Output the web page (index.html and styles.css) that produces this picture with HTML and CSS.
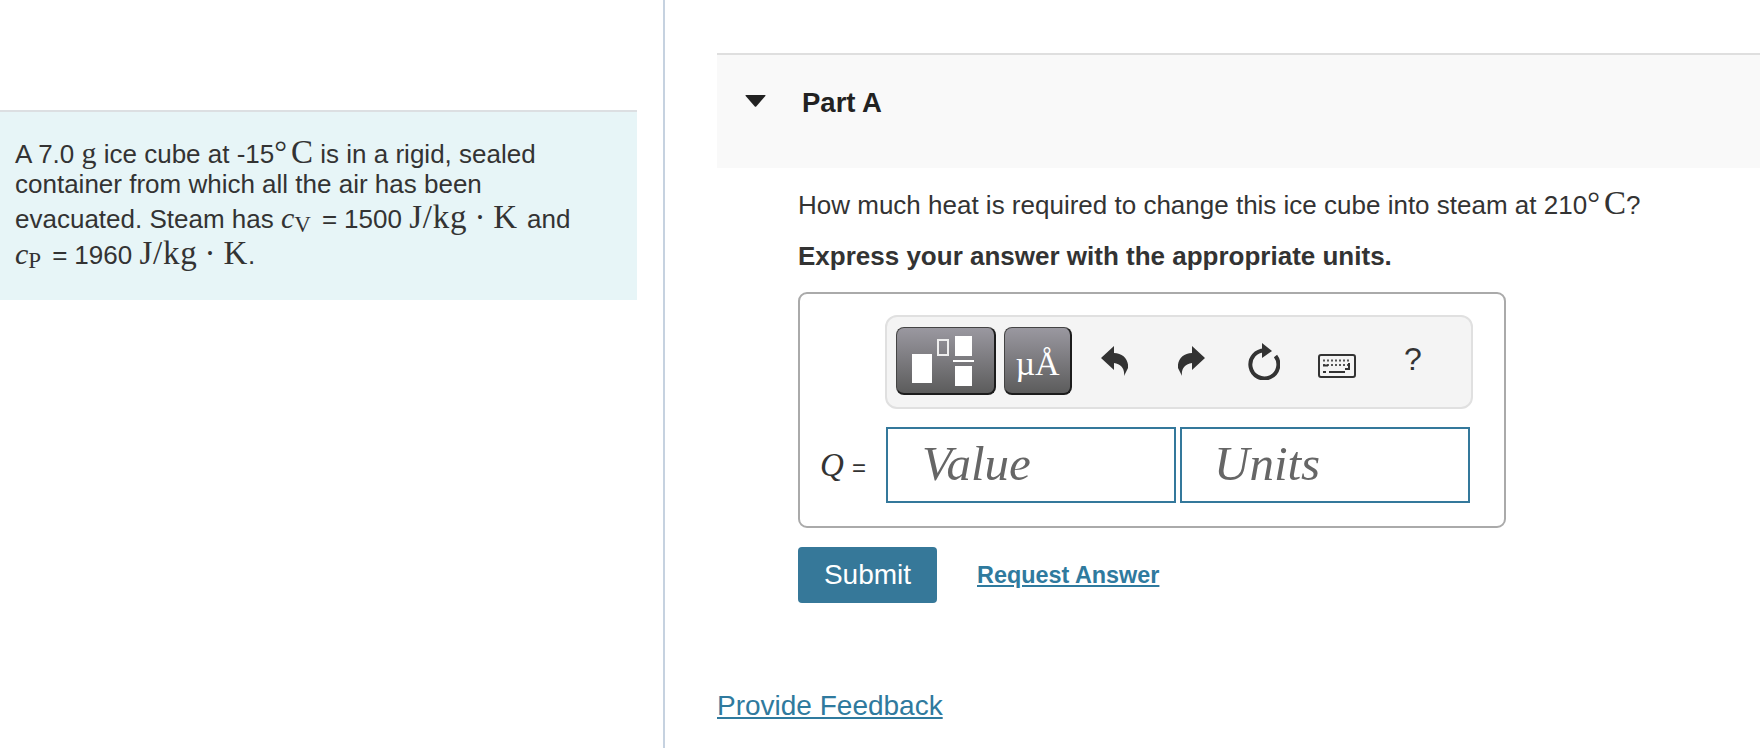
FILE: index.html
```html
<!DOCTYPE html>
<html lang="en">
  <head>
    <meta charset="UTF-8" />
    <meta name="viewport" content="width=device-width, initial-scale=1.0" />
    <title>Part A</title>
    <link rel="stylesheet" href="styles.css">
  </head>
  <body>
    <div class="page">
      <aside class="intro-col">
        <div class="intro">
          <p class="intro-line">A 7.0 <span class="math">g</span> ice cube at -15<span class="deg">°</span><span class="math big">C</span> is in a rigid, sealed</p>
          <p class="intro-line">container from which all the air has been</p>
          <p class="intro-line">evacuated. Steam has <span class="math"><i>c</i><span class="sub">V</span></span><span class="rel">=</span>1500 <span class="math big wide">J/kg<span class="dot">·</span>K</span> <span class="after">and</span></p>
          <p class="intro-line last"><span class="math"><i>c</i><span class="sub">P</span></span><span class="rel">=</span>1960 <span class="math big wide">J/kg<span class="dot">·</span>K</span>.</p>
        </div>
      </aside>

      <main class="main-col">
        <div class="part-head">
          <svg class="caret" width="21" height="12" viewBox="0 0 21 12"><path d="M1 0H20Q21 0 20.300 1L11.200 11.500Q10.500 12 9.800 11.500L.7 1Q0 0 1 0Z" fill="#222"/></svg>
          <h2 class="part-title">Part A</h2>
        </div>

        <div class="part-body">
          <p class="question">How much heat is required to change this ice cube into steam at 210<span class="deg">°</span><span class="math big">C</span>?</p>
          <p class="instruction">Express your answer with the appropriate units.</p>

          <div class="answer-box">
            <div class="toolbar">
              <button class="tpl-btn tpl-wide">
                <svg width="96" height="64" viewBox="0 0 96 64">
                  <rect x="15" y="25" width="20" height="29" fill="#fff"/>
                  <rect x="41" y="11" width="10" height="15" fill="none" stroke="#eee" stroke-width="2"/>
                  <rect x="58" y="7" width="17" height="20" fill="#fff"/>
                  <rect x="56" y="31" width="21" height="2" fill="#fff"/>
                  <rect x="58" y="37" width="17" height="20" fill="#fff"/>
                </svg>
              </button>
              <button class="tpl-btn tpl-units">µÅ</button>

              <svg class="icon undo" width="27" height="30" viewBox="0 0 27 30"><path d="M0 12L13 0V7C22 7 28 14 27 22L23 30C24 23 20 18 13 17V24Z" fill="#333"/></svg>
              <svg class="icon redo" width="27" height="30" viewBox="0 0 27 30"><path d="M27 12L14 0V7C5 7 -1 14 0 22L4 30C3 23 7 18 14 17V24Z" fill="#333"/></svg>
              <svg class="icon reload" width="33" height="37" viewBox="0 0 33 37"><path d="M18 7.500A14 14 0 1 0 28.500 13" fill="none" stroke="#333" stroke-width="4"/><path d="M15 0L25 8L15 15Z" fill="#333"/></svg>
              <svg class="icon keyboard" width="38" height="24" viewBox="0 0 38 24">
                <rect x="1" y="1" width="36" height="22" rx="2" fill="none" stroke="#333" stroke-width="2"/>
                <path d="M5 6.500H33M5 11H33" stroke="#555" stroke-width="2" stroke-dasharray="2 2" fill="none"/>
                <path d="M5 11.500H10M31 9V15H27M11 18H27M5 18H8" stroke="#333" stroke-width="2" fill="none"/>
              </svg>
              <span class="help">?</span>
            </div>

            <div class="answer-row">
              <label class="answer-label"><i>Q</i> <span class="equals">=</span></label>
              <div class="answer-input">Value</div>
              <div class="answer-input units">Units</div>
            </div>
          </div>

          <div class="actions">
            <button class="submit">Submit</button>
            <a href="#" class="request">Request Answer</a>
          </div>
        </div>

        <a href="#" class="feedback">Provide Feedback</a>
      </main>
    </div>
  </body>
</html>
```

FILE: styles.css
```css
html,
body {
  margin: 0;
  height: 100%;
  overflow: hidden;
  background: #fff;
}
body {
  font-family: "Liberation Sans", Arial, sans-serif;
  color: #333;
}
p {
  margin: 0;
}
.page {
  display: flex;
  height: 748px;
}
.math {
  font-family: "Liberation Serif", "Times New Roman", serif;
  font-size: 30px;
}
.math.big {
  font-size: 33px;
}
.math.wide {
  letter-spacing: .8px;
}
.deg {
  font-family: "Liberation Serif", serif;
  font-size: 32px;
  line-height: 0;
  margin-right: 4px;
}
.sub {
  font-size: 23px;
  position: relative;
  top: 4px;
}
.rel {
  margin: 0 7px 0 11px;
}
.dot {
  margin: 0 7px;
}
.after {
  margin-left: 2px;
}

/* left column */
.intro-col {
  width: 663px;
  flex: none;
  padding-top: 110px;
  border-right: 2px solid #c6d2e0;
}
.intro {
  width: 637px;
  height: 190px;
  box-sizing: border-box;
  padding: 23.500px 15px 0;
  border-top: 2px solid #dcdfe2;
  background: #e7f5f7;
  font-size: 26px;
}
.intro-line {
  height: 32.500px;
  line-height: 32.500px;
  white-space: nowrap;
}
.intro-line.last {
  margin-top: 4px;
}

/* right column */
.main-col {
  flex: 1;
  padding: 53px 0 0 52px;
}
.part-head {
  display: flex;
  align-items: flex-start;
  height: 113px;
  border-top: 2px solid #dfdfdf;
  background: #f9f9f9;
}
.caret {
  margin: 40px 0 0 28px;
}
.part-title {
  margin: 30px 0 0 36px;
  font-size: 27.500px;
  line-height: 36px;
  font-weight: 700;
  color: #222;
}
.part-body {
  padding: 16px 0 0 81px;
  width: 707px;
}
.question {
  font-size: 26px;
  line-height: 38px;
  white-space: nowrap;
}
.instruction {
  margin-top: 13px;
  font-size: 26px;
  line-height: 38px;
  font-weight: 700;
  white-space: nowrap;
}
.answer-box {
  margin-top: 17px;
  box-sizing: border-box;
  width: 708px;
  height: 236px;
  padding: 21px 32px 0 86px;
  border: 2px solid #aaa;
  border-radius: 9px;
}
.toolbar {
  display: flex;
  align-items: flex-start;
  box-sizing: border-box;
  width: 588px;
  height: 94px;
  margin-left: -1px;
  padding: 10px 0 0 9px;
  border: 2px solid #e0e0e0;
  border-radius: 12px;
  background: #f4f4f4;
}
.tpl-btn {
  box-sizing: border-box;
  height: 68px;
  padding: 0;
  border: 1px solid #444;
  border-bottom: 2px solid #1c1c1c;
  border-right: 2px solid #1c1c1c;
  border-radius: 8px;
  background: linear-gradient(#9a98a0, #5c5c5c);
  color: #fff;
}
.tpl-wide {
  width: 100px;
}
.tpl-wide svg {
  display: block;
}
.tpl-units {
  width: 68px;
  margin-left: 8px;
  padding-top: 6px;
  font-family: "Liberation Serif", serif;
  font-size: 34px;
  line-height: 60px;
}
.icon {
  flex: none;
}
.undo {
  margin: 19px 0 0 29px;
}
.redo {
  margin: 19px 0 0 50px;
}
.reload {
  margin: 16px 0 0 42px;
}
.keyboard {
  margin: 27px 0 0 38px;
}
.help {
  margin: 12px 0 0 48px;
  font-size: 32px;
  line-height: 40px;
}
.answer-row {
  position: relative;
  display: flex;
  gap: 4px;
  margin-top: 18px;
}
.answer-label {
  position: absolute;
  left: -66px;
  top: 19px;
  font-family: "Liberation Serif", serif;
  font-size: 33px;
  line-height: 38px;
  white-space: nowrap;
}
.equals {
  font-family: "Liberation Sans", sans-serif;
  font-size: 24px;
}
.answer-input {
  box-sizing: border-box;
  width: 290px;
  height: 76px;
  padding-left: 34px;
  border: 2px solid #34789b;
  font-family: "Liberation Serif", serif;
  font-style: italic;
  font-size: 49px;
  line-height: 70px;
  color: #666;
}
.answer-input.units {
  padding-left: 32px;
}
.actions {
  display: flex;
  align-items: center;
  gap: 40px;
  margin-top: 19px;
}
.submit {
  width: 139px;
  height: 56px;
  border: 0;
  border-radius: 4px;
  background: #367899;
  color: #fff;
  font-family: "Liberation Sans", sans-serif;
  font-size: 28px;
}
.request {
  font-size: 23.400px;
  font-weight: 700;
  color: #2f7a9e;
}
.feedback {
  display: inline-block;
  margin-top: 85px;
  font-size: 28px;
  line-height: 36px;
  color: #2f7a9e;
}
```
